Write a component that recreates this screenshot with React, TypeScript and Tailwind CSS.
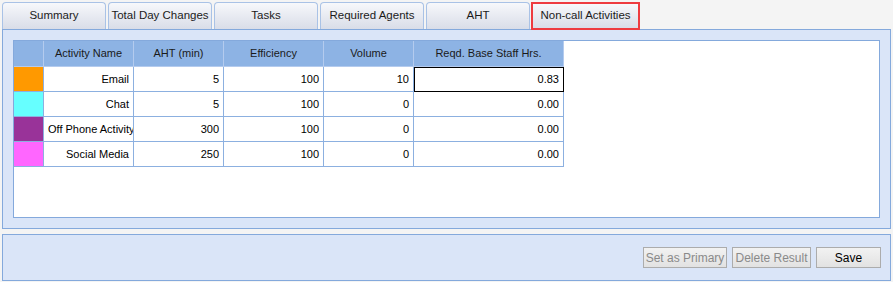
import React from 'react';

const tabs = ["Summary", "Total Day Changes", "Tasks", "Required Agents", "AHT", "Non-call Activities"];

const rows = [
  { color: "bg-[#ff9900]", name: "Email", aht: "5", eff: "100", vol: "10", hrs: "0.83", selected: true },
  { color: "bg-[#66ffff]", name: "Chat", aht: "5", eff: "100", vol: "0", hrs: "0.00" },
  { color: "bg-[#993399]", name: "Off Phone Activity", aht: "300", eff: "100", vol: "0", hrs: "0.00" },
  { color: "bg-[#ff66ff]", name: "Social Media", aht: "250", eff: "100", vol: "0", hrs: "0.00" },
];

const headers = ["", "Activity Name", "AHT (min)", "Efficiency", "Volume", "Reqd. Base Staff Hrs."];

function App() {
  return (
    <div className="w-[893px] h-[282px] bg-[#f4f4f4] text-[11px] text-black overflow-hidden" style={{ fontFamily: '"Liberation Sans", Arial, sans-serif' }}>
      {/* Tab strip */}
      <div className="flex gap-[2px] pt-[2px] pl-[2px] h-[29px]">
        {tabs.map((t, i) => (
          <div
            key={t}
            className={`h-[27px] flex items-center justify-center bg-gradient-to-b from-[#f7f8fb] to-[#d9dde8] text-[#1b1b1b] text-[11.5px] ${
              i === tabs.length - 1
                ? "border-2 border-[#ee3b40] h-[28px] w-[109px] -ml-[1px]"
                : "w-[104px] rounded-t-[4px] border border-b-0 border-[#a9c2e6]"
            }`}
          >
            {t}
          </div>
        ))}
      </div>

      {/* Main panel */}
      <div className="ml-[2px] w-[889px] h-[200px] border border-[#84a9dc] bg-[#dae5f8] p-[10px]">
        <div className="h-[178px] bg-white border border-[#84a9dc]">
          <div className="grid grid-cols-[30px_90px_90px_100px_90px_150px] w-[550px]">
            {headers.map((h, i) => (
              <div key={i} className="h-[26px] bg-[#8db3e4] border-r border-b border-[#b4cbee] flex items-center justify-center text-[#1a1a1a] whitespace-nowrap">
                {h}
              </div>
            ))}
            {rows.map((r) => (
              <React.Fragment key={r.name}>
                <div className={`h-[25px] border-r border-b border-[#8cb0e0] ${r.color}`} />
                <div className="h-[25px] leading-[24px] border-r border-b border-[#8cb0e0] text-right pl-[4px] pr-[4px] overflow-hidden whitespace-nowrap">
                  {r.name}
                </div>
                <div className="h-[25px] border-r border-b border-[#8cb0e0] flex items-center justify-end pr-[4px]">{r.aht}</div>
                <div className="h-[25px] border-r border-b border-[#8cb0e0] flex items-center justify-end pr-[4px]">{r.eff}</div>
                <div className="h-[25px] border-r border-b border-[#8cb0e0] flex items-center justify-end pr-[4px]">{r.vol}</div>
                <div className={`h-[25px] flex items-center justify-end pr-[4px] ${r.selected ? "border border-black" : "border-r border-b border-[#8cb0e0]"}`}>
                  {r.hrs}
                </div>
              </React.Fragment>
            ))}
          </div>
        </div>
      </div>

      {/* Bottom button bar */}
      <div className="ml-[2px] mt-[5px] w-[889px] h-[47px] border border-[#84a9dc] bg-[#dae5f8] flex items-center justify-end gap-[5px] pr-[9px]">
        <button className="w-[84px] h-[21px] border border-[#acacac] bg-gradient-to-b from-[#f2f2f2] to-[#e2e2e2] text-[#8a8a8a] text-[12px]">Set as Primary</button>
        <button className="w-[79px] h-[21px] border border-[#acacac] bg-gradient-to-b from-[#f2f2f2] to-[#e2e2e2] text-[#8a8a8a] text-[12px]">Delete Result</button>
        <button className="w-[65px] h-[21px] border border-[#acacac] bg-gradient-to-b from-[#f2f2f2] to-[#e2e2e2] text-black text-[12px]">Save</button>
      </div>
    </div>
  );
}

export default App;
